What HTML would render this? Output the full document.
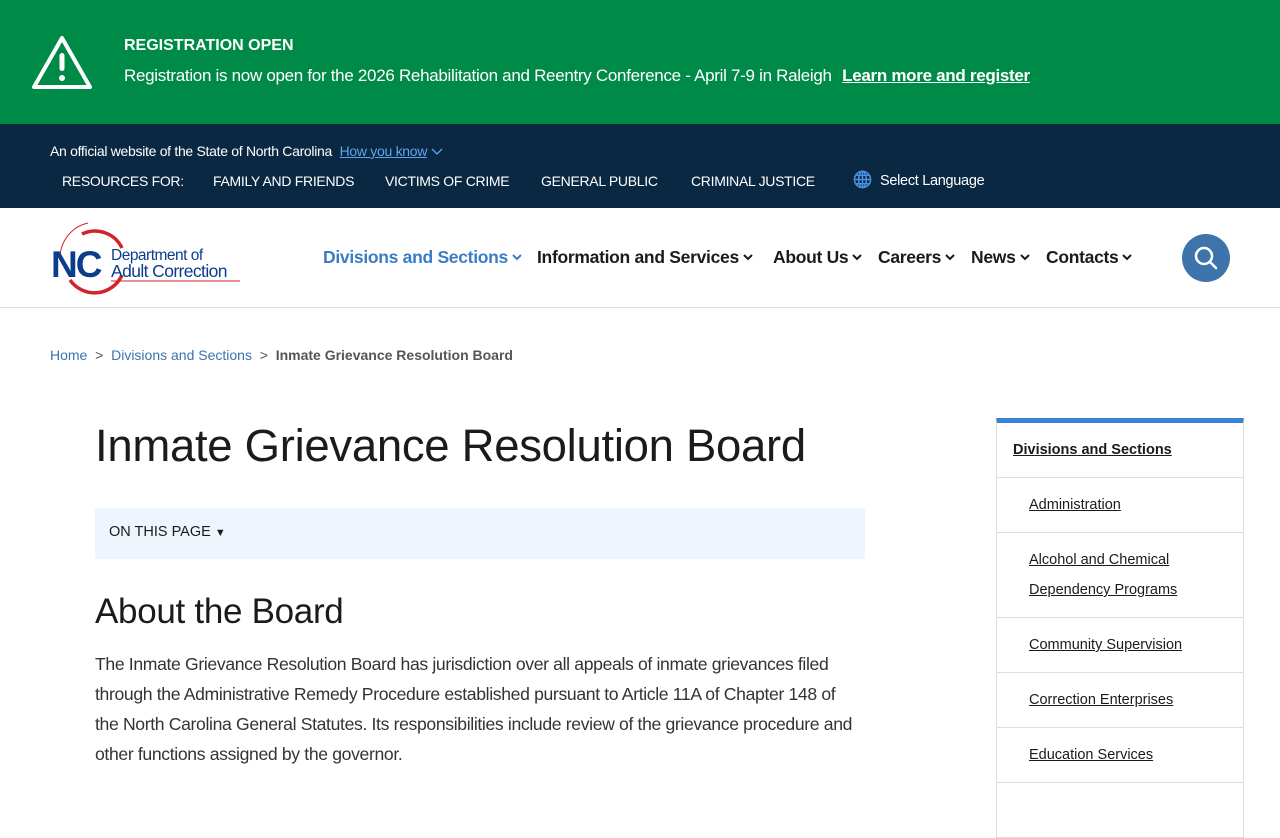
<!DOCTYPE html>
<html><head><meta charset="utf-8"><style>
*{box-sizing:border-box;margin:0;padding:0}
body{width:1280px;height:800px;overflow:hidden;font-family:"Liberation Sans",sans-serif;background:#fff;color:#1b1b1b}
.alert{position:absolute;left:0;top:0;width:1280px;height:124px;background:#008a47;color:#fff}
.alert svg{position:absolute;left:31px;top:35px}
.alert .t{position:absolute;left:124px;top:37px;font-weight:bold;font-size:16px}
.alert .m{position:absolute;left:124px;top:66px;font-size:17px;letter-spacing:-0.3px;white-space:nowrap}
.alert .m a{color:#fff;font-weight:bold;text-decoration:underline;margin-left:6px}
.top{position:absolute;top:124px;left:0;width:1280px;height:84px;background:#0b2842;color:#fff}
.off{position:absolute;left:50px;top:19px;font-size:14px;letter-spacing:-0.3px}
.off a{color:#5ea3ee;text-decoration:underline;margin-left:4px}
.res{position:absolute;top:49px;font-size:14px;letter-spacing:-0.3px;white-space:nowrap}
.hdr{position:absolute;top:208px;left:0;width:1280px;height:100px;border-bottom:1px solid #ddd}
.nav{position:absolute;top:39px;font-size:17.5px;font-weight:bold;white-space:nowrap;letter-spacing:-0.3px}
.nav span{position:absolute;white-space:nowrap}
.nav svg{margin-left:4px;vertical-align:2px}
.srch{position:absolute;left:1182px;top:26px;width:48px;height:48px;border-radius:50%;background:#3d74ab}
.bc{position:absolute;top:347px;left:50px;font-size:14px;color:#555}
.bc a{color:#3a73ad;text-decoration:none}
h1{position:absolute;left:95px;top:420px;font-size:45.5px;font-weight:normal;letter-spacing:-0.3px;color:#1b1b1b}
.otp{position:absolute;left:95px;top:508px;width:770px;height:51px;background:#eef5fd;font-size:14.5px;padding:16px 14px}
h2{position:absolute;left:95px;top:592px;font-size:35px;font-weight:normal;letter-spacing:-0.3px}
.p{position:absolute;left:95px;top:649px;width:800px;font-size:17.6px;line-height:30px;letter-spacing:-0.35px;color:#333;white-space:nowrap}
.side{position:absolute;left:996px;top:418px;width:248px;border-top:5px solid #3b83d6;border-left:1px solid #ddd;border-right:1px solid #ddd}
.side div{border-bottom:1px solid #ddd;font-size:14.5px;line-height:30px;color:#1b1b1b;text-decoration:underline;height:55px}
</style></head><body>
<div class="alert">
<svg width="62" height="56" viewBox="0 0 62 56"><path d="M31 3 L59 52 L3 52 Z" fill="none" stroke="#fff" stroke-width="4" stroke-linejoin="round"/><rect x="28.5" y="18" width="5" height="18" rx="2.5" fill="#fff"/><circle cx="31" cy="43" r="3" fill="#fff"/></svg>
<div class="t">REGISTRATION OPEN</div>
<div class="m">Registration is now open for the 2026 Rehabilitation and Reentry Conference - April 7-9 in Raleigh <a>Learn more and register</a></div>
</div>
<div class="top">
<div class="off">An official website of the State of North Carolina <a>How you know</a> <svg width="12" height="8" viewBox="0 0 12 8"><path d="M1 1l5 5 5-5" fill="none" stroke="#5ea3ee" stroke-width="1.3"/></svg></div>
<div class="res" style="left:62px">RESOURCES FOR:</div>
<div class="res" style="left:213px">FAMILY AND FRIENDS</div>
<div class="res" style="left:385px">VICTIMS OF CRIME</div>
<div class="res" style="left:541px">GENERAL PUBLIC</div>
<div class="res" style="left:691px">CRIMINAL JUSTICE</div>
<svg style="position:absolute;left:853px;top:46px" width="19" height="19" viewBox="0 0 20 20" fill="none" stroke="#4a90e2" stroke-width="1.6"><circle cx="10" cy="10" r="8.5"/><ellipse cx="10" cy="10" rx="4" ry="8.5"/><path d="M1.5 10h17M3 5.5h14M3 14.5h14M10 1.5v17"/></svg>
<div class="res" style="left:880px;top:49px;font-size:14.5px">Select Language</div>
</div>
<div class="hdr">
<svg style="position:absolute;left:50px;top:12px" width="195" height="75" viewBox="0 0 195 75">
<path d="M38 3 A36 36 0 0 0 10 40" fill="none" stroke="#d2232a" stroke-width="1"/>
<path d="M32 14 A30 30 0 0 1 72 28" fill="none" stroke="#d2232a" stroke-width="3.5"/>
<path d="M20 60 A30 30 0 0 0 72 55" fill="none" stroke="#d2232a" stroke-width="3.5"/>
<text x="1" y="57" font-family="Liberation Sans" font-weight="bold" font-size="37" fill="#0b3d8c" letter-spacing="-2">NC</text>
<text x="61" y="40" font-family="Liberation Sans" font-size="15.5" fill="#0b3d8c" letter-spacing="-0.5">Department of</text>
<text x="61" y="57" font-family="Liberation Sans" font-size="17.5" fill="#0b3d8c" letter-spacing="-0.6">Adult Correction</text>
<line x1="61" y1="61" x2="190" y2="61" stroke="#d2232a" stroke-width="1"/>
</svg>
<div class="nav">
<span style="left:323px;color:#3a7dc4">Divisions and Sections<svg width="10" height="7" viewBox="0 0 10 7"><path d="M1 1l4 4 4-4" fill="none" stroke="#3a7dc4" stroke-width="2"/></svg></span>
<span style="left:537px">Information and Services<svg width="10" height="7" viewBox="0 0 10 7"><path d="M1 1l4 4 4-4" fill="none" stroke="#1b1b1b" stroke-width="2"/></svg></span>
<span style="left:773px">About Us<svg width="10" height="7" viewBox="0 0 10 7"><path d="M1 1l4 4 4-4" fill="none" stroke="#1b1b1b" stroke-width="2"/></svg></span>
<span style="left:878px">Careers<svg width="10" height="7" viewBox="0 0 10 7"><path d="M1 1l4 4 4-4" fill="none" stroke="#1b1b1b" stroke-width="2"/></svg></span>
<span style="left:971px">News<svg width="10" height="7" viewBox="0 0 10 7"><path d="M1 1l4 4 4-4" fill="none" stroke="#1b1b1b" stroke-width="2"/></svg></span>
<span style="left:1046px">Contacts<svg width="10" height="7" viewBox="0 0 10 7"><path d="M1 1l4 4 4-4" fill="none" stroke="#1b1b1b" stroke-width="2"/></svg></span>
</div>
<div class="srch"><svg width="48" height="48" viewBox="0 0 48 48" fill="none" stroke="#fff" stroke-width="2.5"><circle cx="22" cy="22" r="8"/><path d="M28 28l6 6" stroke-linecap="round"/></svg></div>
</div>
<div class="bc"><a>Home</a> &nbsp;&gt;&nbsp; <a>Divisions and Sections</a> &nbsp;&gt;&nbsp; <b>Inmate Grievance Resolution Board</b></div>
<h1>Inmate Grievance Resolution Board</h1>
<div class="otp">ON THIS PAGE <span style="font-size:11px">&#9660;</span></div>
<h2>About the Board</h2>
<div class="p">The Inmate Grievance Resolution Board has jurisdiction over all appeals of inmate grievances filed<br>through the Administrative Remedy Procedure established pursuant to Article 11A of Chapter 148 of<br>the North Carolina General Statutes. Its responsibilities include review of the grievance procedure and<br>other functions assigned by the governor.</div>
<div class="side">
<div style="padding:12px 16px;font-weight:bold">Divisions and Sections</div>
<div style="padding:12px 16px 12px 32px">Administration</div>
<div style="padding:12px 16px 12px 32px;height:85px">Alcohol and Chemical Dependency Programs</div>
<div style="padding:12px 16px 12px 32px">Community Supervision</div>
<div style="padding:12px 16px 12px 32px">Correction Enterprises</div>
<div style="padding:12px 16px 12px 32px">Education Services</div>
<div style="text-decoration:none"></div>
</div>
</body></html>
